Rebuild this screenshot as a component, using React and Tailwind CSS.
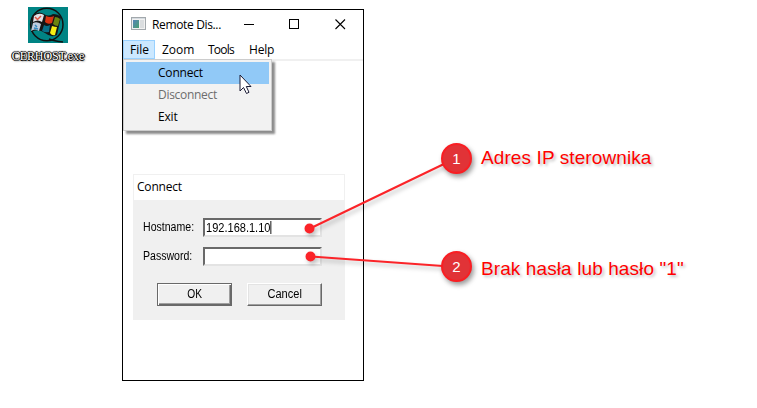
import React from "react";

const ui = "font-['Open_Sans','Noto_Sans',sans-serif] text-[12px] leading-[16px] whitespace-nowrap";
const sans = "font-['Liberation_Sans',Arial,sans-serif] whitespace-nowrap";

function DesktopIcon() {
  return (
    <div className="absolute left-[8px] top-[7px] flex w-[80px] flex-col items-center">
      <svg width="40" height="36" viewBox="0 0 40 36">
        <rect width="40" height="36" fill="#008484" />
        <ellipse cx="18.8" cy="17.5" rx="16.2" ry="16.3" fill="none" stroke="#111" strokeWidth="1.5" />
        <path d="M4 9Q10 3 16 7Q20 10 25 7Q30 7 33 10L29 28Q23 31 17 26Q10 21 3 25Z" fill="#151515" />
        <path d="M6 9Q11 5 16 8L14 15Q10 12 5 15Z" fill="#e0e0e6" />
        <path d="M5 16Q9 14 13 17L11 24Q7 21 3 24Z" fill="#bfcbdc" />
        <path d="M18 9Q22 11 26 9L24 16Q20 18 17 15Z" fill="#d93412" />
        <path d="M27 10Q30 10 32 12L30 19Q27 19 25 17Z" fill="#6b8510" />
        <path d="M16 18Q19 20 22 18L21 25Q17 26 14 24Z" fill="#086f88" />
        <path d="M24 19Q27 20 29 20L27 28Q24 29 22 26Z" fill="#f8ef13" />
        <path d="M7 10L10 13M13 9L10 12" stroke="#d54" strokeWidth="1.500" />
        <path d="M6 21L10 22M7 18L9 20" stroke="#328ac2" strokeWidth="1.5" />
        <path d="M21 32Q26 34 35 35" fill="none" stroke="#111" strokeWidth="1.5" />
      </svg>
      <span className="mt-[5px] whitespace-nowrap font-['Liberation_Serif',serif] text-[12px] leading-[16px] tracking-[-0.1px] text-white [text-shadow:1px_0_0_#000,-1px_0_0_#000,0_1px_0_#000,0_-1px_1px_#000,1px_1px_2px_#000]">
        CERHOST.exe
      </span>
    </div>
  );
}

function TitleBar() {
  return (
    <div className="flex h-[30px] items-start">
      <svg className="ml-[8px] mt-[7px] shrink-0" width="15" height="13" viewBox="0 0 15 13" shapeRendering="crispEdges">
        <defs>
          <linearGradient id="pane" x2="1" y2="1">
            <stop stopColor="#5784ba" />
            <stop offset="1" stopColor="#49a070" />
          </linearGradient>
        </defs>
        <rect x=".5" y=".5" width="14" height="12" fill="#f1f1f1" stroke="#a2a8ac" />
        <rect x="1" y="1" width="13" height="1" fill="#d5dbe0" />
        <rect x="2" y="3" width="6" height="8" fill="url(#pane)" />
        <rect x="9" y="3" width="4" height="8" fill="#dadddf" />
      </svg>
      <span className={`${ui} ml-[6px] mt-[7px] w-[90px] tracking-[-0.35px]`}>Remote Dis...</span>
      <svg className="mt-[8px] shrink-0" width="106" height="12" viewBox="0 0 106 12" fill="none" stroke="#000">
        <path d="M2 6.5H12" />
        <rect x="47.500" y="1.500" width="9" height="9" />
        <path d="M93.500 1.500L103 11M103 1.500L93.500 11" strokeWidth="1.1" />
      </svg>
    </div>
  );
}

function MenuBar() {
  return (
    <div className={`${ui} flex h-[21px] border-b-2 border-[#f0f0f0]`}>
      <span className="h-[19px] w-[32px] border border-[#99d1ff] bg-[#cce8ff] pl-[6px] leading-[18px]">File</span>
      <span className="w-[46px] pl-[7px] leading-[20px]">Zoom</span>
      <span className="w-[41px] pl-[7px] leading-[20px] tracking-[-0.8px]">Tools</span>
      <span className="pl-[7px] leading-[20px] tracking-[-0.2px]">Help</span>
    </div>
  );
}

function FileMenu() {
  return (
    <div className={`${ui} absolute left-0 top-[49px] flex h-[72px] w-[149px] flex-col border border-[#ccc] bg-[#f2f2f2] p-[2px] tracking-[-0.2px] shadow-[3px_3px_2px_rgba(0,0,0,0.45)]`}>
      <span className="h-[22px] bg-[#91c9f7] pl-[32px] leading-[22px]">Connect</span>
      <span className="h-[22px] pl-[32px] leading-[22px] tracking-[-0.3px] text-[#6d6d6d]">Disconnect</span>
      <span className="h-[22px] pl-[32px] leading-[22px]">Exit</span>
    </div>
  );
}

function Field({ label, value }) {
  return (
    <label className="flex h-[19px] items-center">
      <span className={`${sans} w-[60px] pb-[2px] text-[12px] leading-[16px]`}>
        <span className="inline-block origin-left scale-x-[0.88]">{label}</span>
      </span>
      <span className={`${sans} flex h-[19px] w-[119px] items-center border-2 border-b-[#e3e3e3] border-l-[#696969] border-r-[#e3e3e3] border-t-[#696969] bg-white pl-[1px] text-[12px] leading-[14px]`}>
        <span className="flex origin-left scale-x-[0.92] items-center">
          {value}
          {value && <i className="h-[13px] w-px bg-black" />}
        </span>
      </span>
    </label>
  );
}

function ConnectDialog() {
  return (
    <div className="ml-[10px] mt-[113px] h-[146px] w-[212px] bg-[#f0f0f0] p-px">
      <div className={`${ui} h-[25px] bg-white pl-[3px] leading-[24px] tracking-[-0.2px]`}>Connect</div>
      <div className="flex flex-col gap-[10px] pl-[9px] pt-[18px]">
        <Field label="Hostname:" value="192.168.1.10" />
        <Field label="Password:" value="" />
      </div>
      <div className={`${sans} mt-[17px] flex gap-[15px] pl-[23px] text-[12px] leading-[14px]`}>
        <button className="h-[23px] w-[75px] border border-[#696969] bg-[#f0f0f0] pb-[2px] shadow-[inset_1px_1px_#fff,inset_-1px_-1px_#696969,inset_-2px_-2px_#a0a0a0]">
          <span className="inline-block scale-x-[0.85]">OK</span>
        </button>
        <button className="h-[23px] w-[75px] border border-b-[#696969] border-l-white border-r-[#696969] border-t-white bg-[#f0f0f0] pb-[2px] shadow-[inset_-1px_-1px_#a0a0a0,inset_1px_1px_#e3e3e3]">
          <span className="inline-block scale-x-[0.92]">Cancel</span>
        </button>
      </div>
    </div>
  );
}

function Callout({ number, text, className, textClassName }) {
  return (
    <div className={`${sans} absolute left-[441px] flex h-[31px] items-start text-[18px] leading-[30px] text-[#f00] ${className}`}>
      <span className="flex h-[31px] w-[31px] items-center justify-center rounded-full border-2 border-[#f91e23] bg-[#e13337] text-[15px] text-white shadow-[2px_3px_5px_rgba(0,0,0,0.4)]">{number}</span>
      <span className={`ml-[9px] text-[19px] [text-shadow:2px_2px_3px_rgba(0,0,0,0.25)] ${textClassName}`}>{text}</span>
    </div>
  );
}

export default function App() {
  return (
    <main className="relative h-[408px] w-[757px] overflow-hidden bg-white text-black">
      <DesktopIcon />
      <section className="absolute left-[122px] top-[9px] h-[372px] w-[242px] border border-black bg-white">
        <TitleBar />
        <MenuBar />
        <ConnectDialog />
        <FileMenu />
      </section>
      <svg className="absolute left-[239px] top-[74px]" width="14" height="21" viewBox="0 0 14 21">
        <path d="M1 1V17L4.500 13.500L7.500 19.500L10 18.300L7.300 12.500H12Z" fill="#fff" stroke="#1b1b35" strokeWidth="1" />
      </svg>
      <svg className="absolute inset-0 drop-shadow-[2px_3px_2px_rgba(0,0,0,0.25)]" width="757" height="408" fill="none" stroke="#fb2429" strokeWidth="2">
        <path d="M310 228.500L446 163M311 256.500L443 266" />
        <circle cx="309.500" cy="228.500" r="4" fill="#fb2429" />
        <circle cx="310.500" cy="256.500" r="4" fill="#fb2429" />
      </svg>
      <Callout number="1" text="Adres IP sterownika" className="top-[143px]" textClassName="tracking-[0.1px]" />
      <Callout number="2" text={'Brak hasła lub hasło "1"'} className="top-[251px]" textClassName="tracking-[0.1px] mt-[3px]" />
    </main>
  );
}
